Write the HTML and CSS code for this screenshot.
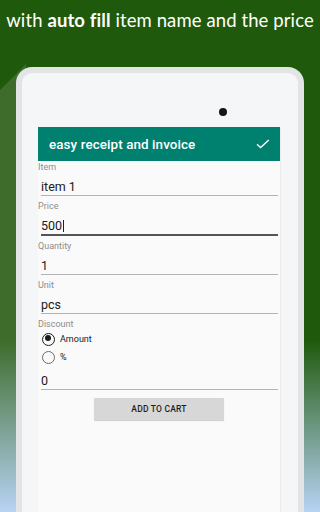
FILE: index.html
```html
<!DOCTYPE html>
<html lang="en">
<head>
    <meta charset="UTF-8">
    <meta name="viewport" content="width=device-width, initial-scale=1.0">
    <title>Easy receipt and invoice</title>
    <link rel="stylesheet" href="styles.css">
</head>
<body>

<div class="page">
    <h1 class="headline">with <b>auto fill</b> item name and the price</h1>

    <div class="tablet">
        <div class="camera"></div>
        <div class="screen">
            <div class="appbar">
                <span class="appbar-title">easy receipt and invoice</span>
                <svg class="check" width="14" height="10" viewBox="0 0 14 10">
                    <path d="M1 5.2 L4.6 8.6 L12.8 1" fill="none" stroke="#ffffff" stroke-width="1.4"/>
                </svg>
            </div>

            <form class="form">
                <label class="field-label">Item</label>
                <div class="field-value">item 1</div>

                <label class="field-label">Price</label>
                <div class="field-value focused">500<span class="cursor"></span></div>

                <label class="field-label">Quantity</label>
                <div class="field-value">1</div>

                <label class="field-label">Unit</label>
                <div class="field-value">pcs</div>

                <label class="field-label">Discount</label>
                <div class="radio-row">
                    <span class="radio checked"></span>
                    <span class="radio-text">Amount</span>
                </div>
                <div class="radio-row">
                    <span class="radio"></span>
                    <span class="radio-text">%</span>
                </div>
                <div class="field-value discount">0</div>

                <div class="btn-row">
                    <button type="button" class="cart-btn">ADD TO CART</button>
                </div>
            </form>
        </div>
    </div>
</div>

</body>
</html>
```

FILE: styles.css
```css
* {
    margin: 0;
    padding: 0;
    box-sizing: border-box;
}

body {
    width: 320px;
    height: 512px;
    overflow: hidden;
    font-family: Roboto, 'Liberation Sans', sans-serif;
}

.page {
    position: relative;
    width: 320px;
    height: 512px;
    background-color: #1f590c;
    overflow: hidden;
}

/* lighter long shadow on the left */
.page::before {
    content: "";
    position: absolute;
    left: 0;
    top: 0;
    width: 30px;
    height: 512px;
    background-color: #3d6c2b;
    clip-path: polygon(0 90px, 26px 64px, 30px 512px, 0 512px);
}

/* fade to sky blue at the bottom */
.page::after {
    content: "";
    position: absolute;
    left: 0;
    top: 0;
    width: 320px;
    height: 512px;
    background: linear-gradient(to bottom, rgba(184, 211, 244, 0) 340px, rgba(184, 211, 244, 1) 512px);
}

.headline {
    position: relative;
    z-index: 1;
    height: 40px;
    line-height: 40px;
    text-align: center;
    color: #ffffff;
    font-family: Lato, 'Open Sans', sans-serif;
    font-weight: 400;
    font-size: 18.5px;
    letter-spacing: 0.1px;
    white-space: nowrap;
}

.headline b {
    font-weight: 700;
}

.tablet {
    position: relative;
    z-index: 2;
    margin: 27px 16px 0 16px;
    height: 460px;
    background-color: #f5f6f8;
    border: 6px solid #e3e4e6;
    border-bottom: none;
    border-radius: 16px 16px 0 0;
    padding: 54px 17px 0 16px;
}

.camera {
    position: absolute;
    top: 35px;
    left: 197px;
    width: 8px;
    height: 8px;
    border-radius: 50%;
    background-color: #151515;
}

.screen {
    height: 400px;
    background-color: #fafafa;
    border-right: 1px solid #ececec;
}

.appbar {
    height: 34px;
    background-color: #00806f;
    display: flex;
    align-items: center;
    justify-content: space-between;
    padding: 0 10px 0 11px;
}

.appbar-title {
    color: #ffffff;
    font-size: 13.4px;
    font-weight: 500;
    letter-spacing: 0.1px;
}

.check {
    display: block;
    margin-top: -1px;
}

.form {
    display: flex;
    flex-direction: column;
}

.field-label {
    display: block;
    height: 12px;
    line-height: 12px;
    font-size: 9px;
    color: #8d8d8d;
    margin-top: 4px;
}

.form .field-label:first-child {
    margin-top: 0;
}

.field-value {
    position: relative;
    margin: 6px 2px 0 3px;
    height: 17px;
    line-height: 16px;
    font-size: 12.5px;
    color: #202020;
    border-bottom: 1px solid #b3b3b3;
}

.field-value.focused {
    height: 18px;
    border-bottom: 2px solid #555555;
}

.cursor {
    display: inline-block;
    width: 1px;
    height: 12px;
    background-color: #202020;
    vertical-align: -2px;
    margin-left: 1px;
}

.radio-row {
    height: 18px;
    display: flex;
    align-items: center;
    padding-left: 4px;
}

.radio {
    width: 13px;
    height: 13px;
    border-radius: 50%;
    border: 1.7px solid #6b6b6b;
    margin-right: 5px;
    position: relative;
}

.radio.checked {
    border-color: #1c1c1c;
}

.radio.checked::after {
    content: "";
    position: absolute;
    left: 1.8px;
    top: 1.8px;
    width: 6px;
    height: 6px;
    border-radius: 50%;
    background-color: #1c1c1c;
}

.radio-text {
    font-size: 9px;
    color: #202020;
}

.field-value.discount {
    margin-top: 7px;
}

.btn-row {
    display: flex;
    justify-content: center;
    margin-top: 8px;
}

.cart-btn {
    width: 130px;
    height: 22px;
    border: none;
    border-radius: 1px;
    background-color: #d6d7d6;
    color: #1e1e1e;
    font-family: Roboto, 'Liberation Sans', sans-serif;
    font-size: 8.5px;
    font-weight: 500;
    letter-spacing: 0.2px;
    box-shadow: 0 1px 1px rgba(0, 0, 0, 0.18);
}
```
